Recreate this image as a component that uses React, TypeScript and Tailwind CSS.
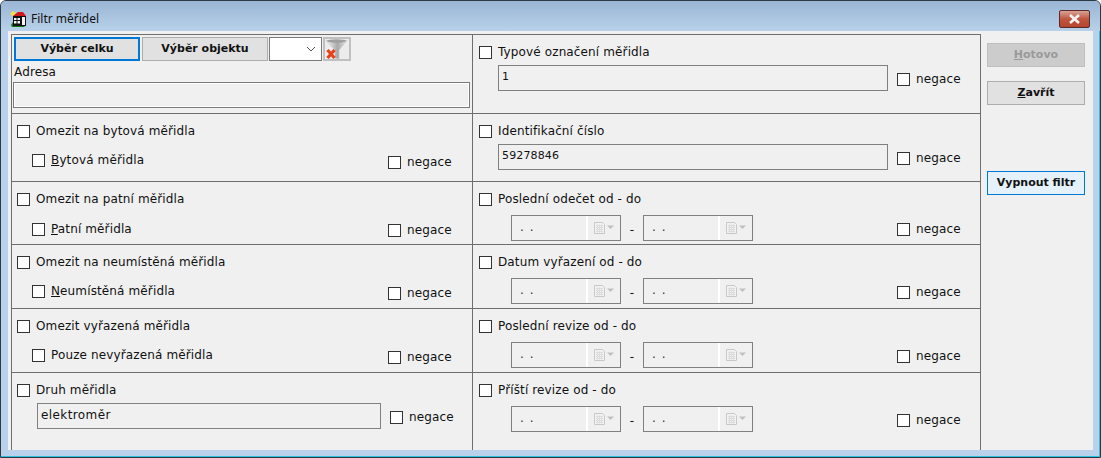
const FONT = "font-['DejaVu_Sans',sans-serif] text-[12px] leading-[14px] tracking-[0.13px] text-[#111]";

function Check({ label, className = '' }: { label: React.ReactNode; className?: string }) {
    return (
        <div className={`flex items-center gap-[6px] h-[14px] ${className}`}>
            <span className="w-[13px] h-[13px] border border-[#333] bg-white shrink-0" />
            <span className="whitespace-nowrap">{label}</span>
        </div>
    );
}

function Field({ value = '', className = '' }: { value?: string; className?: string }) {
    return (
        <div className={`h-[26px] border border-[#808080] bg-[#f0f0f0] flex items-center px-[3px] pb-[2px] ${className}`}>
            {value}
        </div>
    );
}

function CalendarIcon() {
    return (
        <svg width="21" height="13" viewBox="0 0 21 13">
            <path d="M0.5 0.5h8l2 2v9h-10z" fill="#f2f2f2" stroke="#c8c8c8" />
            <path d="M2 3.5h7M2 5.5h7M2 7.5h7M2 9.5h7M3.5 2.5v8M5.5 2.5v8M7.5 2.5v8" stroke="#dcdcdc" />
            <path d="M13 3.5h7l-3.5 3.5z" fill="#c0c0c0" />
        </svg>
    );
}

function DateInput() {
    return (
        <div className="w-[110px] h-[26px] border border-[#808080] flex bg-[#f0f0f0]">
            <div className="w-[76px] border-r-2 border-white pl-[8px] pb-[2px] flex items-center whitespace-pre tracking-[1px] text-[#333]">. .</div>
            <div className="flex-1 flex items-center pl-[6px]">
                <CalendarIcon />
            </div>
        </div>
    );
}

function DateFields() {
    return (
        <div className="flex items-center pl-[32px] mt-[9px]">
            <DateInput />
            <span className="w-[22px] text-center mt-[4px]">-</span>
            <DateInput />
            <Check label="negace" className="ml-[144px] mt-[2px]" />
        </div>
    );
}

function DateRow({ label, rowHeight }: { label: string; rowHeight: string }) {
    return (
        <div className={`border-b border-[#6e6e6e] pl-[6px] pt-[10px] ${rowHeight}`}>
            <Check label={label} />
            <DateFields />
        </div>
    );
}

function MeterRow({ title, sub, rowHeight, subTop, negTop }: { title: string; sub: React.ReactNode; rowHeight: string; subTop: string; negTop: string }) {
    return (
        <div className={`border-b border-[#6e6e6e] pl-[5px] pt-[10px] ${rowHeight}`}>
            <Check label={title} />
            <div className={`flex items-start pl-[15px] ${subTop}`}>
                <Check label={sub} className="w-[356px]" />
                <Check label="negace" className={negTop} />
            </div>
        </div>
    );
}

function SideButton({ children, className = '' }: { children: React.ReactNode; className?: string }) {
    return (
        <div className={`w-[98px] h-[24px] flex items-center justify-center font-bold text-[11px] tracking-normal ${className}`}>{children}</div>
    );
}

export default function App() {
    return (
        <div className={`${FONT} w-[1101px] h-[458px] flex flex-col overflow-hidden bg-[#b9d1ea] border border-[#2c3a44] rounded-t-[6px] shadow-[inset_-1px_-1px_0_#2cc0dc]`}>
            {/* Title bar */}
            <div className="h-[30px] shrink-0 flex items-start pl-[9px] pt-[10px] pr-[10px] bg-gradient-to-b from-[#9ab6d4] to-[#b9d1ea]">
                <svg width="17" height="16" viewBox="0 0 17 16" className="shrink-0">
                    <path d="M1 14l2-3h11l2 3-2 2H2z" fill="#0a7a10" />
                    <path d="M0 3l3-3 3 2-3 3z" fill="#f5e33a" />
                    <path d="M3 5l5-4h5l3 4z" fill="#d01818" />
                    <rect x="3" y="5" width="13" height="10" fill="#111" />
                    <path d="M4 7h2.5v2H4zM7.5 7H10v2H7.5zM4 10h2.5v2.5H4zM7.5 10H10v2.5H7.5zM12 6h3v8h-3z" fill="#f4f4f4" />
                </svg>
                <span className="ml-[4px] mt-[1px] font-['Noto_Sans',sans-serif] tracking-normal text-[#111]">Filtr měřidel</span>
                <div className="ml-auto w-[31px] h-[18px] -mt-[1px] rounded-[2px] border border-[#5b2a2a] bg-gradient-to-b from-[#d8a296] via-[#c0553f] to-[#b5442e] flex items-center justify-center">
                    <svg width="13" height="10" viewBox="0 0 13 10">
                        <path d="M2 1l9 8M11 1l-9 8" stroke="#f4f4f4" strokeWidth="2.6" />
                    </svg>
                </div>
            </div>

            {/* Client area */}
            <div className="flex-1 mx-[7px] mb-[7px] bg-[#f0f0f0] pt-[3px] pl-[3px] flex min-h-0">
                {/* Left column */}
                <div className="w-[462px] shrink-0 border-l border-t border-r border-[#6e6e6e] flex flex-col">
                    <div className="h-[79px] border-b border-[#6e6e6e] pl-[2px] pt-[2px]">
                        <div className="flex items-stretch h-[24px]">
                            <SideButton className="!w-[126px] border-2 border-[#0078d7] bg-[#e1e1e1]">Výběr celku</SideButton>
                            <SideButton className="!w-[126px] ml-[2px] border border-[#adadad] bg-[#e1e1e1]">Výběr objektu</SideButton>
                            <div className="w-[53px] ml-[1px] border border-[#7a7a7a] bg-white flex items-center justify-end pr-[5px]">
                                <svg width="10" height="6" viewBox="0 0 10 6">
                                    <path d="M1 1l4 4 4-4" fill="none" stroke="#555" />
                                </svg>
                            </div>
                            <div className="w-[28px] ml-[1px] border-2 border-[#c0c0c0] bg-[#ececec] flex items-center justify-center">
                                <svg width="24" height="22" viewBox="0 0 24 22">
                                    <defs>
                                        <linearGradient id="funnel" x1="0" x2="1" y1="0" y2="0">
                                            <stop offset="0" stopColor="#fafafa" />
                                            <stop offset="0.55" stopColor="#a8a8a8" />
                                            <stop offset="1" stopColor="#ececec" />
                                        </linearGradient>
                                    </defs>
                                    <path d="M1 2.5h21l-8 9.5v9l-4-1v-8z" fill="url(#funnel)" stroke="#b8b8b8" strokeWidth="0.5" />
                                    <ellipse cx="11.5" cy="3" rx="9.5" ry="1.8" fill="#a0a0a0" />
                                    <path d="M2.5 12l7 8M9.5 12l-7 8" stroke="#e8421a" strokeWidth="3.2" />
                                </svg>
                            </div>
                        </div>
                        <div className="mt-[3px] mb-[2px] h-[16px] flex items-center">Adresa</div>
                        <div className="h-[26px] w-[457px] -ml-[1px] border border-[#7a7a7a] bg-[#f0f0f0] shadow-[inset_-1px_-1px_0_#fff,inset_1px_1px_0_#fff]" />
                    </div>
                    <MeterRow title="Omezit na bytová měřidla" sub={<><u>B</u>ytová měřidla</>} rowHeight="h-[68px]" subTop="mt-[15px]" negTop="mt-[2px]" />
                    <MeterRow title="Omezit na patní měřidla" sub={<><u>P</u>atní měřidla</>} rowHeight="h-[63px]" subTop="mt-[16px]" negTop="mt-[1px]" />
                    <MeterRow title="Omezit na neumístěná měřidla" sub={<><u>N</u>eumístěná měřidla</>} rowHeight="h-[64px]" subTop="mt-[15px]" negTop="mt-[2px]" />
                    <MeterRow title="Omezit vyřazená měřidla" sub="Pouze nevyřazená měřidla" rowHeight="h-[64px]" subTop="mt-[15px]" negTop="mt-[2px]" />
                    <div className="flex-1 pl-[5px] pt-[10px]">
                        <Check label="Druh měřidla" />
                        <div className="flex items-center pl-[20px] mt-[6px]">
                            <Field value="elektroměr" className="w-[344px] tracking-[0.4px]" />
                            <Check label="negace" className="ml-[9px] mt-[2px]" />
                        </div>
                    </div>
                </div>

                {/* Right column */}
                <div className="w-[508px] shrink-0 border-t border-r border-[#6e6e6e] flex flex-col">
                    <div className="h-[79px] border-b border-[#6e6e6e] pl-[6px] pt-[10px]">
                        <Check label="Typové označení měřidla" />
                        <div className="flex items-center pl-[19px] mt-[6px]">
                            <Field value="1" className="w-[390px] text-[11px]" />
                            <Check label="negace" className="ml-[9px] mt-[2px]" />
                        </div>
                    </div>
                    <div className="h-[68px] border-b border-[#6e6e6e] pl-[6px] pt-[10px]">
                        <Check label="Identifikační číslo" />
                        <div className="flex items-center pl-[19px] mt-[6px]">
                            <Field value="59278846" className="w-[390px] text-[11px]" />
                            <Check label="negace" className="ml-[9px] mt-[2px]" />
                        </div>
                    </div>
                    <DateRow label="Poslední odečet od - do" rowHeight="h-[63px]" />
                    <DateRow label="Datum vyřazení od - do" rowHeight="h-[64px]" />
                    <DateRow label="Poslední revize od - do" rowHeight="h-[64px]" />
                    <div className="flex-1 pl-[6px] pt-[10px]">
                        <Check label="Příští revize od - do" />
                        <DateFields />
                    </div>
                </div>

                {/* Buttons */}
                <div className="flex-1 flex flex-col pl-[6px] pt-[9px]">
                    <SideButton className="border border-[#bfbfbf] bg-[#cccccc] text-[#9a9a9a]"><u>H</u>otovo</SideButton>
                    <SideButton className="mt-[14px] border border-[#adadad] bg-[#e1e1e1]"><u>Z</u>avřít</SideButton>
                    <SideButton className="mt-[66px] border border-[#0078d7] bg-[#e5f1fb]">Vypnout filtr</SideButton>
                </div>
            </div>
        </div>
    );
}
